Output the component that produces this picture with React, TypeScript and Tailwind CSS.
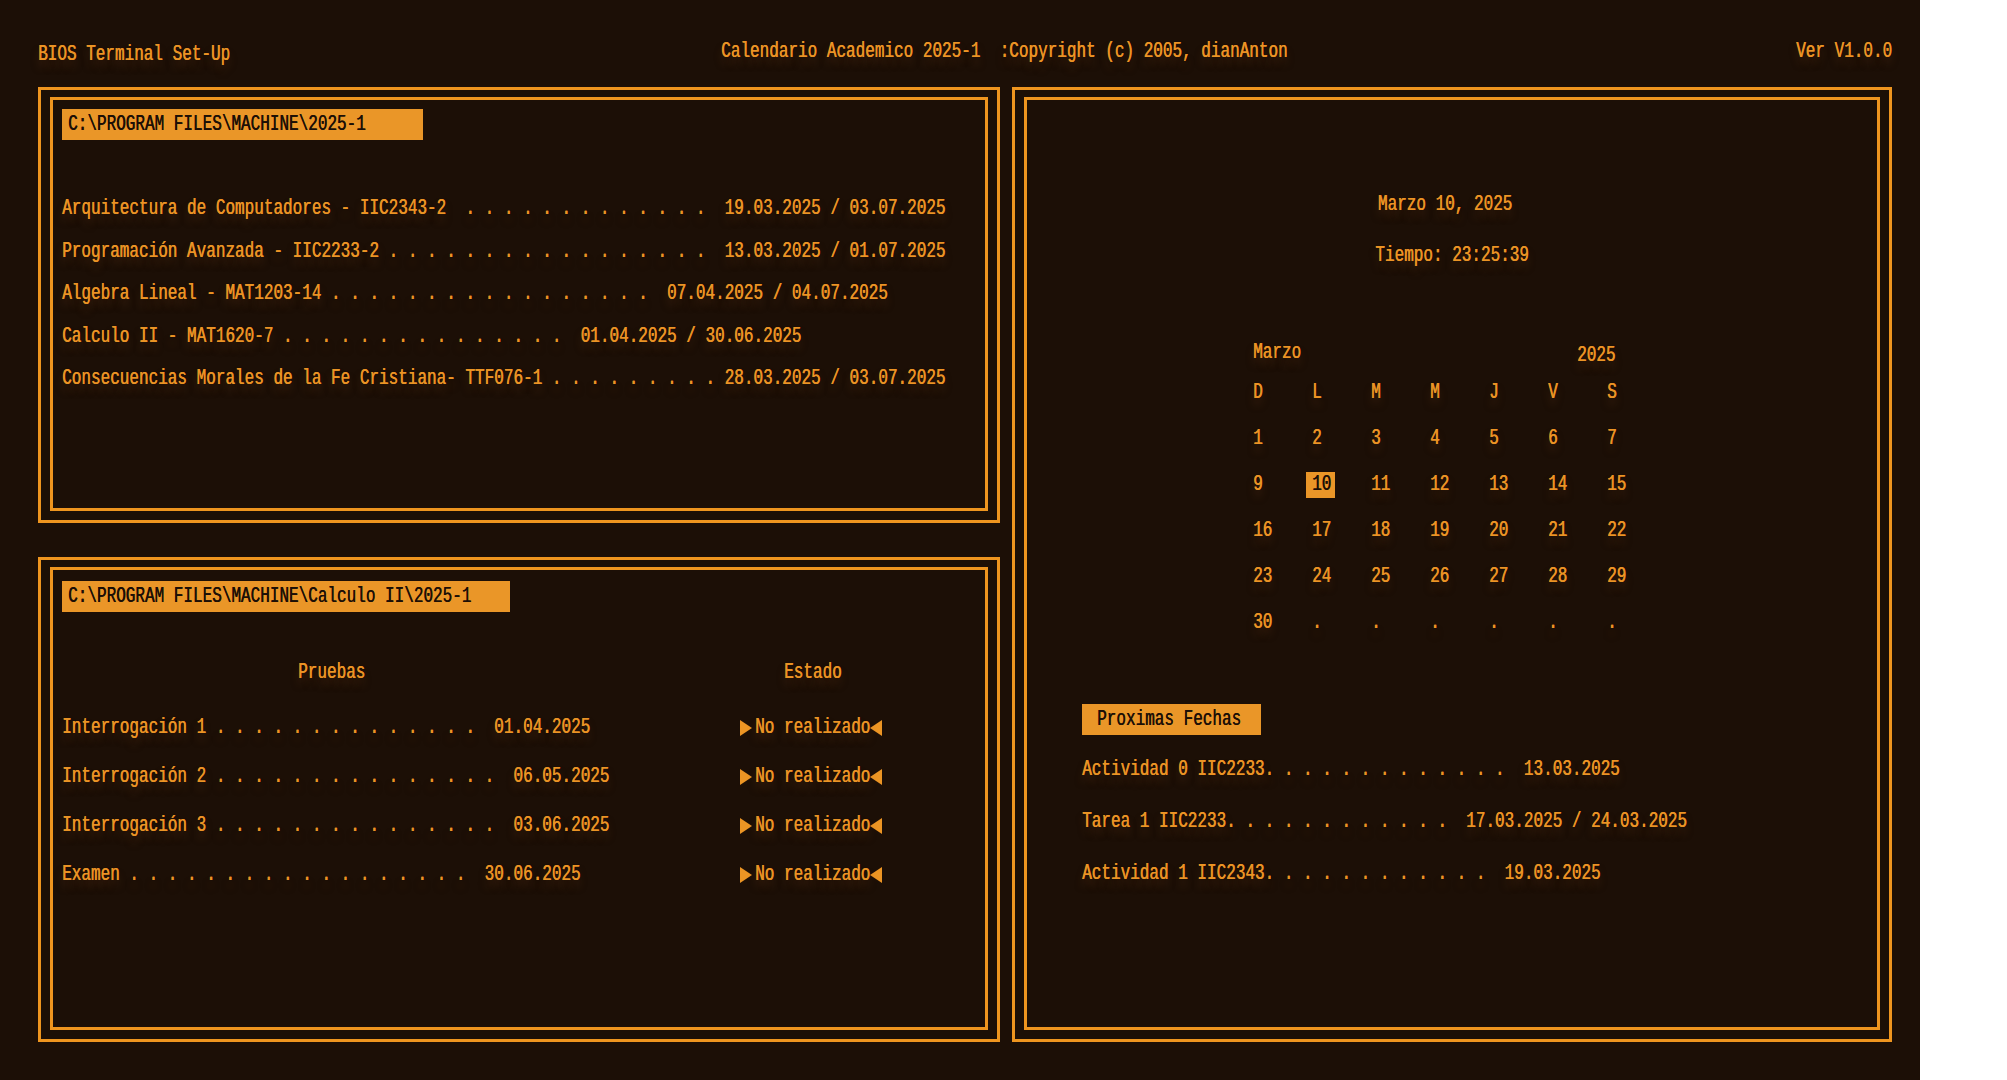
import type { ReactNode } from "react";

// lead("Examen", " ", 3, "  ", "30.06.2025") -> "Examen . . .  30.06.2025"
const lead = (name: string, sep: string, dots: number, gap: string, date: string) =>
  name + sep + Array(dots).fill(".").join(" ") + gap + date;

const courses = [
  lead("Arquitectura de Computadores - IIC2343-2", "  ", 13, "  ", "19.03.2025 / 03.07.2025"),
  lead("Programación Avanzada - IIC2233-2", " ", 17, "  ", "13.03.2025 / 01.07.2025"),
  lead("Algebra Lineal - MAT1203-14", " ", 17, "  ", "07.04.2025 / 04.07.2025"),
  lead("Calculo II - MAT1620-7", " ", 15, "  ", "01.04.2025 / 30.06.2025"),
  lead("Consecuencias Morales de la Fe Cristiana- TTF076-1", " ", 9, " ", "28.03.2025 / 03.07.2025"),
];

const pruebas = [
  lead("Interrogación 1", " ", 14, "  ", "01.04.2025"),
  lead("Interrogación 2", " ", 15, "  ", "06.05.2025"),
  lead("Interrogación 3", " ", 15, "  ", "03.06.2025"),
  lead("Examen", " ", 18, "  ", "30.06.2025"),
];

const fechas = [
  lead("Actividad 0 IIC2233", "", 13, "  ", "13.03.2025"),
  lead("Tarea 1 IIC2233", "", 12, "  ", "17.03.2025 / 24.03.2025"),
  lead("Actividad 1 IIC2343", "", 12, "  ", "19.03.2025"),
];

const days = ["D", "L", "M", "M", "J", "V", "S"];
const weeks = [
  ["1", "2", "3", "4", "5", "6", "7"],
  ["9", "10", "11", "12", "13", "14", "15"],
  ["16", "17", "18", "19", "20", "21", "22"],
  ["23", "24", "25", "26", "27", "28", "29"],
  ["30", ".", ".", ".", ".", ".", "."],
];

function Line({ children, className = "" }: { children: ReactNode; className?: string }) {
  return (
    <div className={`h-[20px] leading-[20px] whitespace-pre scale-y-[1.35] ${className}`}>{children}</div>
  );
}

function PathBox({ children, className = "" }: { children: ReactNode; className?: string }) {
  return (
    <div className={`flex h-[31px] items-center bg-[#ea9628] text-[#1c0f06] [text-shadow:0.4px_0_0_#1c0f06] ${className}`}>
      <span className="whitespace-pre scale-y-[1.35]">{children}</span>
    </div>
  );
}

function Frame({ children, className = "" }: { children: ReactNode; className?: string }) {
  return (
    <div className={`border-[3px] border-[#ee951f] px-[9px] pt-[7px] pb-[9px] ${className}`}>
      <div className="h-full border-[3px] border-[#ee951f]">{children}</div>
    </div>
  );
}

function Arrow({ left }: { left?: boolean }) {
  return (
    <svg width="12" height="16" viewBox="0 0 12 16" className="shrink-0">
      <polygon points={left ? "12,0 12,16 0,8" : "0,0 0,16 12,8"} fill="#ec9524" />
    </svg>
  );
}

export default function App() {
  return (
    <div className="h-[1080px] w-[1920px] overflow-hidden bg-[#1c0f06] pl-[38px] pr-[28px] pt-[42px] font-['Liberation_Mono',monospace] text-[16px] text-[#eb9425] [text-shadow:0.4px_0_0_#eb9425,0_5px_6px_rgba(80,44,18,0.55)]">
      <header className="flex h-[20px] items-start">
        <Line className="mt-[3px]">BIOS Terminal Set-Up</Line>
        <Line className="ml-[491px]">Calendario Academico 2025-1  :Copyright (c) 2005, dianAnton</Line>
        <Line className="ml-auto">Ver V1.0.0</Line>
      </header>

      <main className="mt-[25px] flex gap-[12px]">
        <div className="flex w-[962px] flex-col gap-[34px]">
          <Frame className="h-[436px]">
            <div className="pl-[9px] pt-[9px]">
              <PathBox className="w-[361px] pl-[6px]">C:\PROGRAM FILES\MACHINE\2025-1</PathBox>
              <div className="mt-[59px] flex flex-col gap-[22.5px]">
                {courses.map((c) => (
                  <Line key={c}>{c}</Line>
                ))}
              </div>
            </div>
          </Frame>

          <Frame className="h-[485px]">
            <div className="pl-[9px] pt-[11px]">
              <PathBox className="w-[448px] pl-[6px]">C:\PROGRAM FILES\MACHINE\Calculo II\2025-1</PathBox>
              <div className="mt-[51px] grid grid-cols-[678px_1fr]">
                <Line className="pl-[236px]">Pruebas</Line>
                <Line className="pl-[44px]">Estado</Line>
              </div>
              <div className="mt-[35px] flex flex-col gap-[29px]">
                {pruebas.map((p) => (
                  <div key={p} className="grid grid-cols-[678px_1fr]">
                    <Line>{p}</Line>
                    <div className="flex h-[20px] items-center">
                      <Arrow />
                      <Line className="ml-[3px]">No realizado</Line>
                      <Arrow left />
                    </div>
                  </div>
                ))}
              </div>
            </div>
          </Frame>
        </div>

        <Frame className="h-[955px] flex-1">
          <div className="flex flex-col pt-[95px]">
            <Line className="pr-[14px] text-center">Marzo 10, 2025</Line>
            <Line className="mt-[31px] text-center">Tiempo: 23:25:39</Line>

            <div className="mt-[77px] pl-[226px]">
              <div className="flex">
                <Line className="w-[324px]">Marzo</Line>
                <Line className="mt-[3px]">2025</Line>
              </div>
              <div className="mt-[17px] grid grid-cols-[repeat(7,59px)] gap-y-[26px]">
                {days.map((d, i) => (
                  <Line key={"d" + i}>{d}</Line>
                ))}
                {weeks.flat().map((n, i) =>
                  n === "10" ? (
                    <div key={"n" + i} className="flex h-[20px] items-center">
                      <span className="-ml-[6px] flex h-[26px] w-[29px] items-center bg-[#ea9628] pl-[6px] text-[#1c0f06] [text-shadow:0.4px_0_0_#1c0f06]">
                        <span className="scale-y-[1.35]">10</span>
                      </span>
                    </div>
                  ) : (
                    <Line key={"n" + i}>{n}</Line>
                  )
                )}
              </div>
            </div>

            <div className="mt-[71px] pl-[55px]">
              <PathBox className="w-[179px] pl-[15px]">Proximas Fechas</PathBox>
              <div className="mt-[25px] flex flex-col gap-[32px]">
                {fechas.map((f) => (
                  <Line key={f}>{f}</Line>
                ))}
              </div>
            </div>
          </div>
        </Frame>
      </main>
    </div>
  );
}
